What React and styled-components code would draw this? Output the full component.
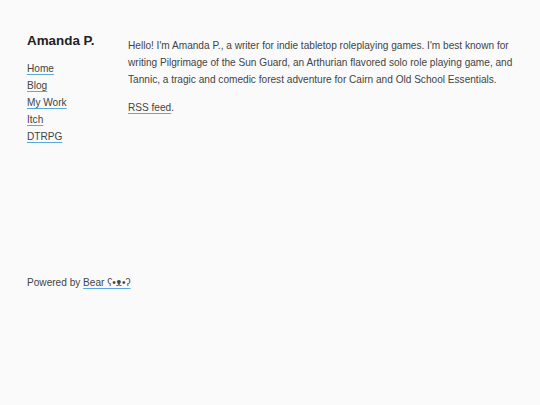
import styled, { createGlobalStyle } from 'styled-components';

const GlobalStyle = createGlobalStyle`
  body {
    margin: 0;
    background: #fafafa;
    color: #444;
    font-family: "Liberation Sans", Arial, sans-serif;
    font-size: 10.1px;
    line-height: 17px;
  }
`;

const Page = styled.div`
  padding: 31px 27px;
`;

const Columns = styled.div`
  display: flex;
  min-height: 243px;
`;

const Sidebar = styled.header`
  width: 101px;
  flex-shrink: 0;
`;

const Title = styled.h1`
  margin: 0 0 9px;
  font-size: 13.4px;
  font-weight: 700;
  line-height: 20px;
  color: #222;
`;

const Nav = styled.nav`
  display: flex;
  flex-direction: column;
  align-items: flex-start;
`;

const Link = styled.a`
  color: #444;
  text-decoration: underline;
  text-decoration-color: #5aa9dd;
  text-underline-offset: 2px;
`;

const Main = styled.main`
  width: 390px;
  padding-top: 6px;
`;

const Para = styled.p`
  margin: 0 0 11px;
`;

const Footer = styled.footer``;

const App = () => (
  <Page>
    <GlobalStyle />
    <Columns>
      <Sidebar>
        <Title>Amanda P.</Title>
        <Nav>
          <Link href="#">Home</Link>
          <Link href="#">Blog</Link>
          <Link href="#">My Work</Link>
          <Link href="#">Itch</Link>
          <Link href="#">DTRPG</Link>
        </Nav>
      </Sidebar>
      <Main>
        <Para>
          Hello! I'm Amanda P., a writer for indie tabletop roleplaying games. I'm best known for
          writing Pilgrimage of the Sun Guard, an Arthurian flavored solo role playing game, and
          Tannic, a tragic and comedic forest adventure for Cairn and Old School Essentials.
        </Para>
        <Para>
          <Link href="#">RSS feed</Link>.
        </Para>
      </Main>
    </Columns>
    <Footer>
      Powered by <Link href="#">Bear ʕ•ᴥ•ʔ</Link>
    </Footer>
  </Page>
);

export default App;
